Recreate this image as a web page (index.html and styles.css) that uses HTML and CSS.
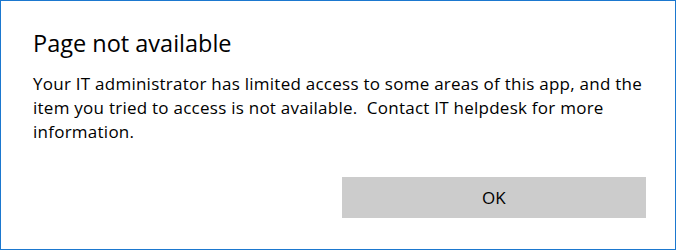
FILE: index.html
```html
<!DOCTYPE html>
<html lang="en">
<head>
    <meta charset="UTF-8">
    <title>Page not available</title>
    <link rel="stylesheet" href="styles.css">
</head>
<body>
    <div class="dialog">
        <h1 class="dialog-title">Page not available</h1>
        <p class="dialog-text">Your IT administrator has limited access to some areas of this app, and the item you tried to access is not available.&nbsp; Contact IT helpdesk for more information.</p>
        <div class="dialog-buttons">
            <span></span>
            <button class="btn" type="button">OK</button>
        </div>
    </div>
</body>
</html>
```

FILE: styles.css
```css
html, body {
    margin: 0;
    background: #ffffff;
}

body {
    font-family: "Open Sans", "Noto Sans", sans-serif;
    color: #000000;
}

.dialog {
    box-sizing: border-box;
    width: 676px;
    height: 250px;
    border: 1px solid #1b78cf;
    padding: 26px 29px 31px 32px;
    display: flex;
    flex-direction: column;
}

.dialog-title {
    margin: 0;
    font-size: 23.5px;
    font-weight: normal;
    line-height: 32px;
}

.dialog-text {
    margin: 13px 0 0;
    font-size: 17px;
    line-height: 24px;
    letter-spacing: 0.25px;
}

.dialog-buttons {
    margin-top: auto;
    display: grid;
    grid-template-columns: 1fr 1fr;
    gap: 4px;
}

.btn {
    height: 41px;
    border: none;
    background: #cccccc;
    font-family: inherit;
    font-size: 17px;
    color: #000000;
    padding: 0;
}
```
